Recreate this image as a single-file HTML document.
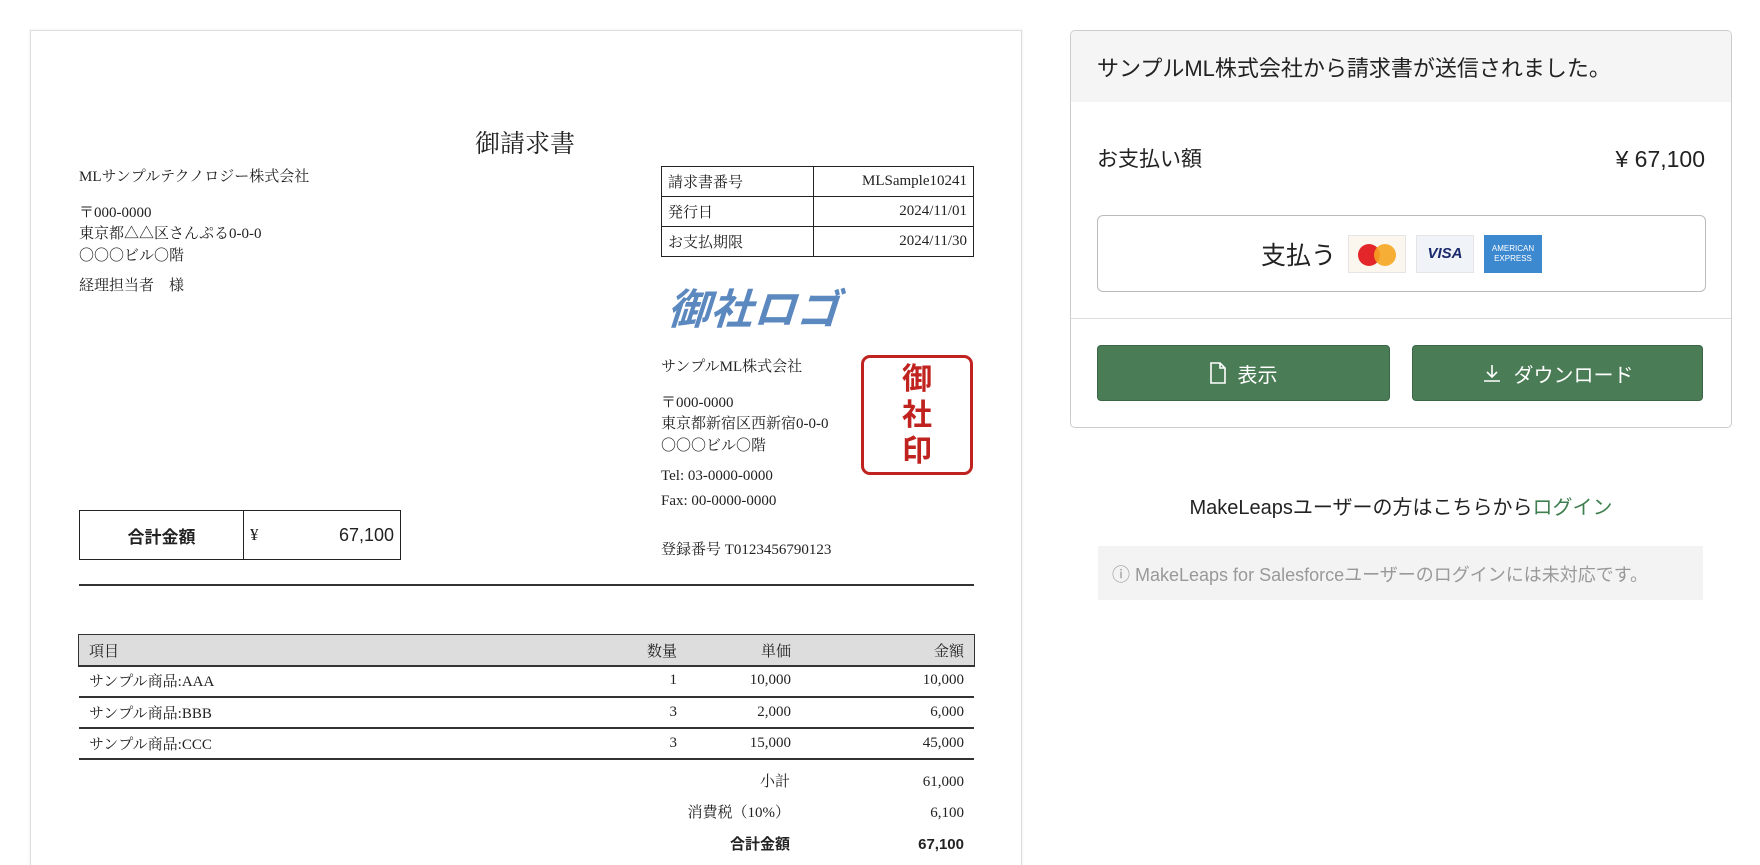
<!DOCTYPE html>
<html><head><meta charset="utf-8"><style>
*{margin:0;padding:0;box-sizing:border-box}
html,body{width:1760px;height:865px;overflow:hidden}
body{background:#fff;position:relative;font-family:"Liberation Serif","Noto Serif CJK SC",serif;color:#222}
.a{position:absolute;white-space:nowrap}
.s{font-family:"Liberation Sans","Noto Sans CJK JP",sans-serif}
#paper{position:absolute;left:30px;top:30px;width:992px;height:835px;border:1px solid #ddd;border-bottom:none;box-shadow:0 0 3px rgba(0,0,0,.08)}
.t{font-size:15px;line-height:15px}
table{border-collapse:collapse}
#meta{position:absolute;left:661px;top:166px;width:313px;font-size:15px}
#meta td{border:1.5px solid #222;height:30px;padding:0 6px}
#meta td:last-child{text-align:right}
#items{position:absolute;left:79px;top:634px;width:895px;font-size:15px}
#items td{height:31px;padding:0 10px;border-bottom:2px solid #333;vertical-align:middle}
#items tr.h td{background:#ddd;border:1.5px solid #333;border-left:none;border-right:none}
#items tr.h{outline:1.5px solid #333}
.r{text-align:right}
#card{position:absolute;left:1070px;top:30px;width:662px;height:398px;border:1px solid #ccc;border-radius:5px;overflow:hidden}
.btn{position:absolute;top:345px;height:56px;background:#4a7c56;border:1px solid #3a6646;border-radius:4px;color:#fff;font-size:20px;display:flex;align-items:center;justify-content:center;gap:12px}
</style></head><body>
<div id="paper"></div>
<div class="a" style="left:0;width:1050px;text-align:center;top:124px;font-size:25px">御請求書</div>
<div class="a t" style="left:79px;top:170px">MLサンプルテクノロジー株式会社</div>
<div class="a t" style="left:79px;top:206px">〒000-0000</div>
<div class="a t" style="left:79px;top:227px">東京都△△区さんぷる0-0-0</div>
<div class="a t" style="left:79px;top:249px">〇〇〇ビル〇階</div>
<div class="a t" style="left:79px;top:279px">経理担当者　様</div>
<table id="meta"><tr><td style="width:152px">請求書番号</td><td>MLSample10241</td></tr><tr><td>発行日</td><td>2024/11/01</td></tr><tr><td>お支払期限</td><td>2024/11/30</td></tr></table>
<div class="a s" style="left:668px;top:276px;font-size:42px;font-weight:bold;font-style:italic;color:#5b88bf;letter-spacing:1px;transform:skewX(-4deg)">御社ロゴ</div>
<div class="a t" style="left:661px;top:360px">サンプルML株式会社</div>
<div class="a t" style="left:661px;top:396px">〒000-0000</div>
<div class="a t" style="left:661px;top:417px">東京都新宿区西新宿0-0-0</div>
<div class="a t" style="left:661px;top:439px">〇〇〇ビル〇階</div>
<div class="a t" style="left:661px;top:469px">Tel: 03-0000-0000</div>
<div class="a t" style="left:661px;top:494px">Fax: 00-0000-0000</div>
<div class="a t" style="left:661px;top:543px">登録番号 T0123456790123</div>
<div class="a s" style="left:861px;top:355px;width:112px;height:120px;border:3.5px solid #c0231f;border-radius:9px;color:#c0231f;font-weight:bold;font-size:30px;line-height:36px;text-align:center;padding-top:4px;white-space:normal">御<br>社<br>印</div>
<div class="a" style="left:79px;top:510px;width:322px;height:50px;border:1.5px solid #222;display:flex;font-size:17px">
<div class="s" style="width:164px;border-right:1.5px solid #222;display:flex;align-items:center;justify-content:center;font-weight:bold">合計金額</div>
<div style="flex:1;display:flex;align-items:center;justify-content:space-between;padding:0 6px"><span>¥</span><span class="s" style="font-size:18px">67,100</span></div></div>
<div class="a" style="left:79px;top:584px;width:895px;border-top:2px solid #333"></div>
<table id="items">
<tr class="h"><td>項目</td><td class="r" style="width:90px">数量</td><td class="r" style="width:114px">単価</td><td class="r" style="width:173px">金額</td></tr>
<tr><td>サンプル商品:AAA</td><td class="r">1</td><td class="r">10,000</td><td class="r">10,000</td></tr>
<tr><td>サンプル商品:BBB</td><td class="r">3</td><td class="r">2,000</td><td class="r">6,000</td></tr>
<tr><td>サンプル商品:CCC</td><td class="r">3</td><td class="r">15,000</td><td class="r">45,000</td></tr>
</table>
<div class="a t r" style="left:600px;width:190px;top:775px">小計</div><div class="a t r" style="left:800px;width:164px;top:775px">61,000</div>
<div class="a t r" style="left:600px;width:190px;top:806px">消費税（10%）</div><div class="a t r" style="left:800px;width:164px;top:806px">6,100</div>
<div class="a t r s" style="left:600px;width:190px;top:837px;font-weight:bold">合計金額</div><div class="a t r s" style="left:800px;width:164px;top:837px;font-weight:bold">67,100</div>

<div id="card" class="s">
<div style="height:71px;background:#f5f5f5;font-size:22px;padding:20px 0 0 26px;color:#222">サンプルML株式会社から請求書が送信されました。</div>
<div class="a" style="left:26px;top:112px;font-size:21px">お支払い額</div>
<div class="a" style="right:26px;top:115px;font-size:23px">¥ 67,100</div>
<div class="a" style="left:26px;top:184px;width:609px;height:77px;border:1px solid #bbb;border-radius:6px;display:flex;align-items:center;justify-content:center;gap:10px">
<span style="font-size:25px;margin-right:2px">支払う</span>
<span style="width:58px;height:38px;background:#fbf7ee;border:1px solid #e5e5e5;position:relative;display:inline-block"><i style="position:absolute;left:9px;top:8px;width:22px;height:22px;border-radius:50%;background:#e2262a"></i><i style="position:absolute;left:25px;top:8px;width:22px;height:22px;border-radius:50%;background:#f6a521;opacity:.9"></i></span>
<span style="width:58px;height:38px;background:#f0f3f8;border:1px solid #e5e5e5;color:#1a2a6c;font-weight:bold;font-style:italic;font-size:15px;display:flex;align-items:center;justify-content:center">VISA</span>
<span style="width:58px;height:38px;background:#3c89d0;color:#fff;font-size:8px;line-height:10px;display:flex;align-items:center;justify-content:center;text-align:center">AMERICAN<br>EXPRESS</span>
</div>
<div class="a" style="left:0;top:287px;width:662px;border-top:1px solid #ddd"></div>
</div>
<div class="btn s" style="left:1097px;width:293px"><svg width="16" height="22" viewBox="0 0 16 22" fill="none" stroke="#fff" stroke-width="1.6"><path d="M1 1h9l5 5v15H1z M10 1v5h5"/></svg>表示</div>
<div class="btn s" style="left:1412px;width:291px"><svg width="20" height="20" viewBox="0 0 20 20" fill="none" stroke="#fff" stroke-width="1.6"><path d="M10 2v12M5 9l5 5 5-5M2 18h16"/></svg>ダウンロード</div>
<div class="a s" style="left:1070px;width:662px;text-align:center;top:491px;font-size:20px">MakeLeapsユーザーの方はこちらから<span style="color:#3f7f4f">ログイン</span></div>
<div class="a s" style="left:1098px;top:546px;width:605px;height:54px;background:#f3f3f3;color:#999;font-size:18px;padding:15px 0 0 14px">ⓘ MakeLeaps for Salesforceユーザーのログインには未対応です。</div>
</body></html>
